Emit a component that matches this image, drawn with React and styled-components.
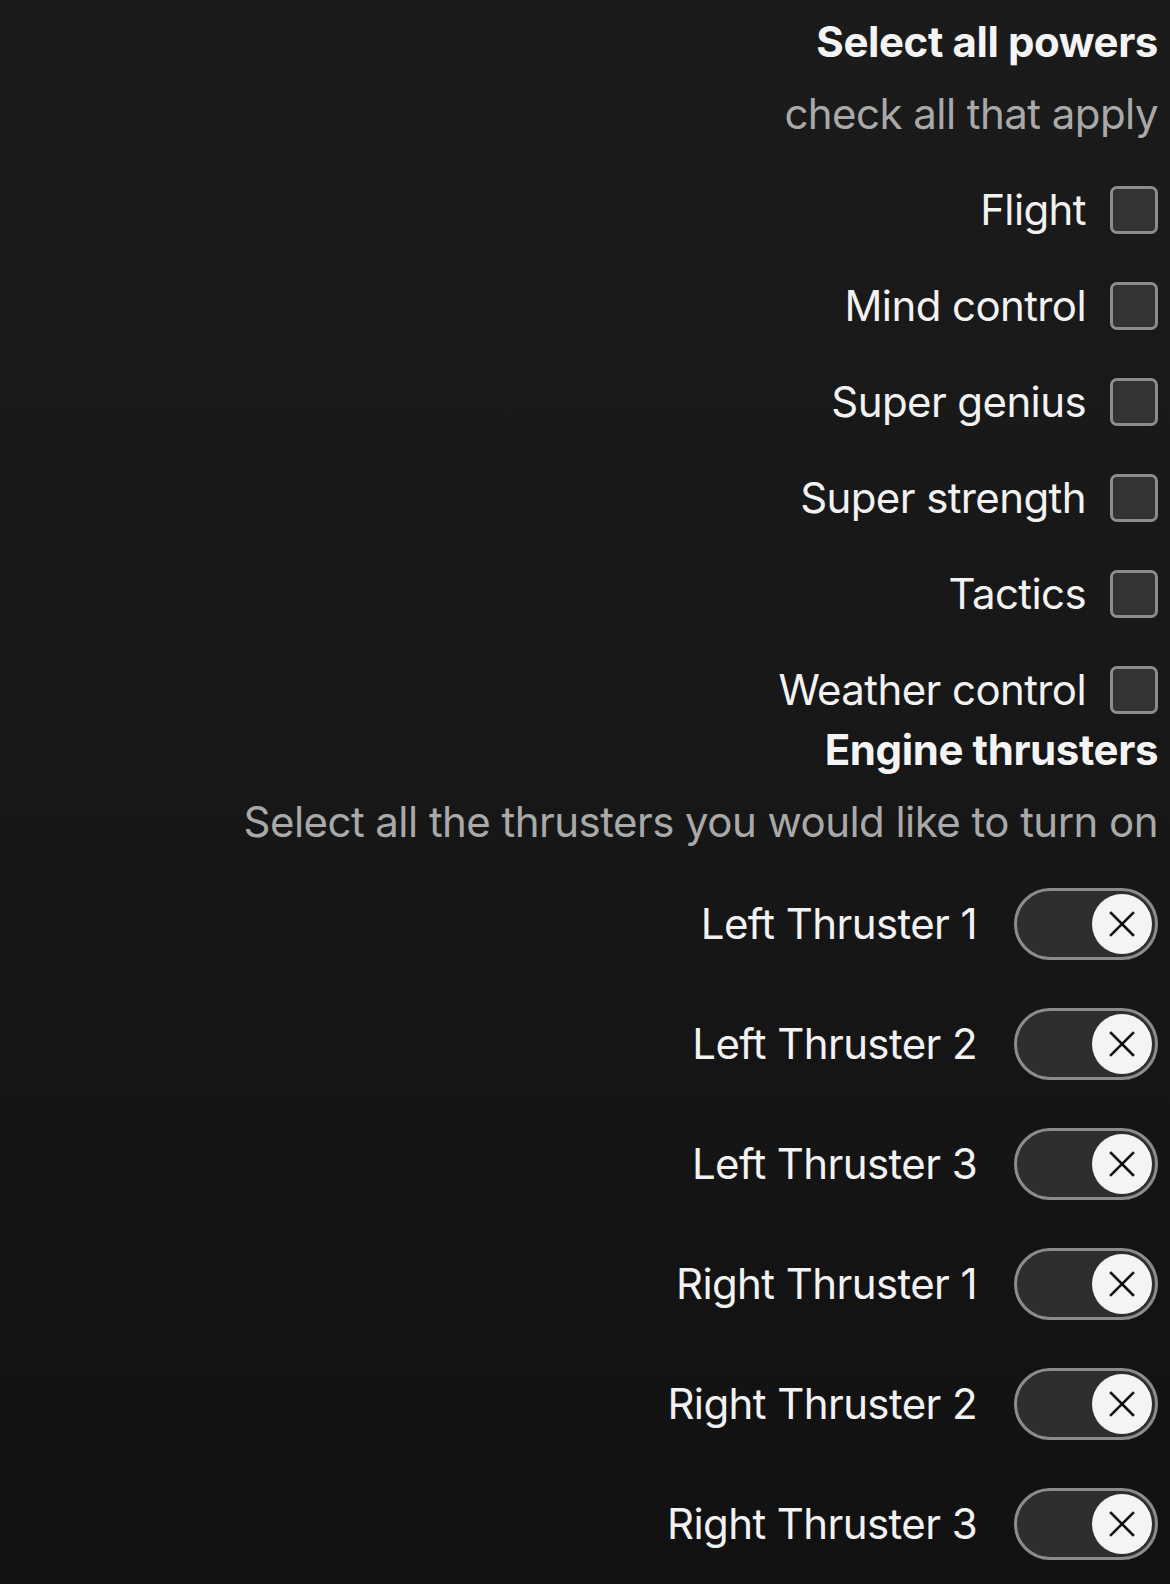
import { useState } from "react";
import styled, { createGlobalStyle } from "styled-components";

const GlobalStyle = createGlobalStyle`
  html, body {
    margin: 0;
    padding: 0;
  }
  body {
    background: linear-gradient(180deg, #1b1b1b 0%, #171717 50%, #111111 100%);
    min-height: 1584px;
    font-family: Inter, "Noto Sans", sans-serif;
    color: #f2f2f2;
  }
`;

const powers = [
  "Flight",
  "Mind control",
  "Super genius",
  "Super strength",
  "Tactics",
  "Weather control",
];

const thrusters = [
  "Left Thruster 1",
  "Left Thruster 2",
  "Left Thruster 3",
  "Right Thruster 1",
  "Right Thruster 2",
  "Right Thruster 3",
];

export default function App() {
  const [checked, setChecked] = useState({});
  const [on, setOn] = useState({});

  function toggleCheck(name) {
    setChecked({ ...checked, [name]: !checked[name] });
  }

  function toggleOn(name) {
    setOn({ ...on, [name]: !on[name] });
  }

  return (
    <Page>
      <GlobalStyle />
      <Fieldset>
        <Legend>Select all powers</Legend>
        <Hint $after={36}>check all that apply</Hint>
        <CheckList>
          {powers.map((p) => (
            <CheckRow key={p}>
              <Label>{p}</Label>
              <Box
                type="checkbox"
                checked={!!checked[p]}
                onChange={() => toggleCheck(p)}
              />
            </CheckRow>
          ))}
        </CheckList>
      </Fieldset>
      <Fieldset>
        <Legend>Engine thrusters</Legend>
        <Hint $after={42}>Select all the thrusters you would like to turn on</Hint>
        <SwitchList>
          {thrusters.map((t) => (
            <SwitchRow key={t}>
              <Label>{t}</Label>
              <Switch
                type="button"
                $on={!!on[t]}
                onClick={() => toggleOn(t)}
              >
                <Knob $on={!!on[t]}>
                  <svg width="30" height="30" viewBox="0 0 30 30" fill="none">
                    <path
                      d="M4 4L26 26M26 4L4 26"
                      stroke="#111"
                      strokeWidth="2.6"
                      strokeLinecap="square"
                    />
                  </svg>
                </Knob>
              </Switch>
            </SwitchRow>
          ))}
        </SwitchList>
      </Fieldset>
    </Page>
  );
}

const Page = styled.div`
  display: flex;
  flex-direction: column;
  align-items: flex-end;
  padding: 18px 12px 0 0;
`;

const Fieldset = styled.div`
  display: flex;
  flex-direction: column;
  align-items: flex-end;
`;

const Legend = styled.div`
  font-size: 42px;
  font-weight: 700;
  line-height: 48px;
  color: #f4f4f4;
  letter-spacing: -0.4px;
`;

const Hint = styled.div`
  font-size: 42px;
  line-height: 48px;
  color: #a9a9a9;
  letter-spacing: -0.55px;
  margin-top: 24px;
  margin-bottom: ${(p) => p.$after}px;
`;

const CheckList = styled.div`
  display: flex;
  flex-direction: column;
  align-items: flex-end;
  gap: 24px;
`;

const CheckRow = styled.label`
  display: flex;
  align-items: center;
  gap: 24px;
  height: 72px;
  cursor: pointer;
`;

const Label = styled.span`
  font-size: 42px;
  line-height: 48px;
  color: #f2f2f2;
  letter-spacing: -0.6px;
`;

const Box = styled.input`
  appearance: none;
  margin: 0;
  width: 48px;
  height: 48px;
  box-sizing: border-box;
  border: 3px solid #8c8c8c;
  border-radius: 7px;
  background: #333333;
  cursor: pointer;

  &:checked {
    background: #f2f2f2;
  }
`;

const SwitchList = styled.div`
  display: flex;
  flex-direction: column;
  align-items: flex-end;
  gap: 48px;
`;

const SwitchRow = styled.div`
  display: flex;
  align-items: center;
  gap: 37px;
  height: 72px;
`;

const Switch = styled.button`
  position: relative;
  display: flex;
  align-items: center;
  justify-content: ${(p) => (p.$on ? "flex-start" : "flex-end")};
  width: 144px;
  height: 72px;
  box-sizing: border-box;
  padding: 0 3px;
  border: 3px solid #8c8c8c;
  border-radius: 36px;
  background: #2e2e2e;
  cursor: pointer;
`;

const Knob = styled.span`
  display: flex;
  align-items: center;
  justify-content: center;
  width: 60px;
  height: 60px;
  border-radius: 50%;
  background: #f4f4f4;
`;
